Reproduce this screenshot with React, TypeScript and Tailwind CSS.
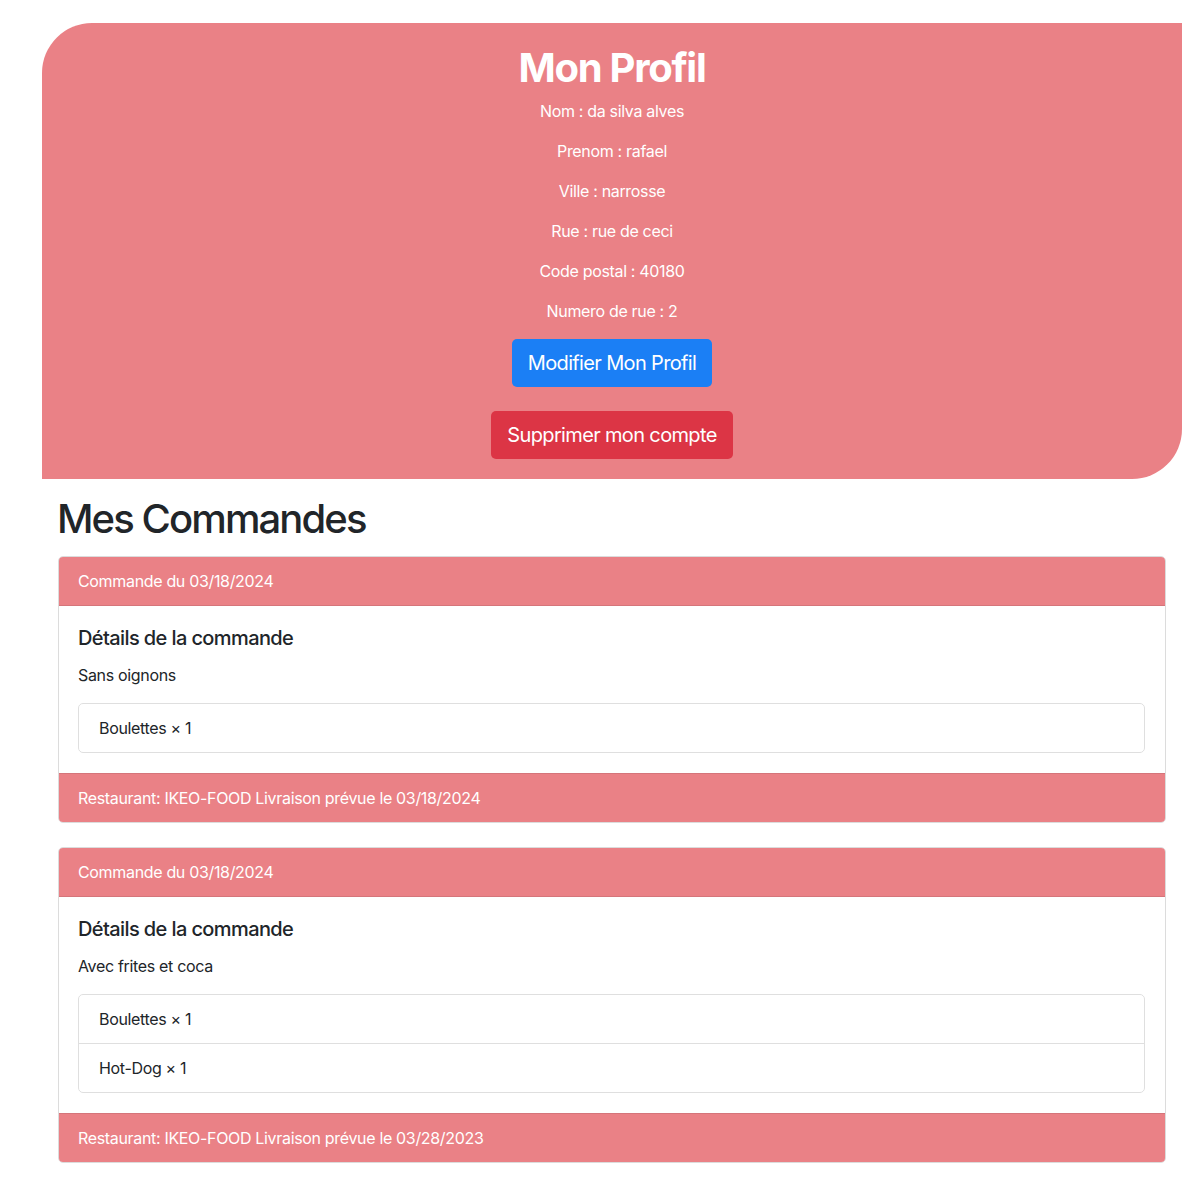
import React from "react";

const orders = [
  {
    date: "03/18/2024",
    details: "Sans oignons",
    items: ["Boulettes × 1"],
    delivery: "03/18/2024",
  },
  {
    date: "03/18/2024",
    details: "Avec frites et coca",
    items: ["Boulettes × 1", "Hot-Dog × 1"],
    delivery: "03/28/2023",
  },
];

const fields = [
  "Nom : da silva alves",
  "Prenom : rafael",
  "Ville : narrosse",
  "Rue : rue de ceci",
  "Code postal : 40180",
  "Numero de rue : 2",
];

export default function App() {
  return (
    <div
      className="min-h-[1204px] bg-white text-[#212529] text-[16px] leading-[24px] tracking-[-0.33px]"
      style={{ fontFamily: "Inter, 'Noto Sans', sans-serif" }}
    >
      <div className="pt-[23px] pl-[42px] w-[1182px]">
        <div className="bg-[#ea8186] rounded-tl-[50px] rounded-br-[50px] pt-[21px] pb-[20px] flex flex-col items-center text-white">
          <h1 className="text-[40px] leading-[48px] font-bold mb-[7px] tracking-[-1.3px]">Mon Profil</h1>
          {fields.map((f) => (
            <p key={f} className="mb-[16px] text-[16px] leading-[24px]">
              {f}
            </p>
          ))}
          <button className="bg-[#1b7ff5] text-white text-[20px] leading-[30px] px-[16px] py-[9px] rounded-[5px] tracking-[-0.65px]">
            Modifier Mon Profil
          </button>
          <button className="mt-[24px] bg-[#dc3545] text-white text-[20px] leading-[30px] px-[16px] py-[9px] rounded-[5px] tracking-[-0.65px]">
            Supprimer mon compte
          </button>
        </div>
        <div className="px-[16px]">
          <h1 className="text-[40px] leading-[48px] font-medium mt-[16px] mb-[13px] -ml-[1px] tracking-[-1.9px]">Mes Commandes</h1>
          {orders.map((o, i) => (
            <div key={i} className="border border-[#dcdcdc] rounded-[5px] mb-[24px] overflow-hidden">
              <div className="bg-[#ea8186] text-white pl-[19px] pr-[20px] pt-[12px] pb-[12px] border-b border-[#d5757a]">
                Commande du {o.date}
              </div>
              <div className="pt-[20px] pb-[20px] pl-[19px] pr-[20px]">
                <h5 className="text-[20px] leading-[24px] font-medium mb-[13px] tracking-[-0.6px]">Détails de la commande</h5>
                <p className="mb-[16px]">{o.details}</p>
                <div className="border border-[#dfdfdf] rounded-[5px]">
                  {o.items.map((it, j) => (
                    <div
                      key={j}
                      className={`px-[20px] py-[12px] ${j > 0 ? "border-t border-[#dfdfdf]" : ""}`}
                    >
                      {it}
                    </div>
                  ))}
                </div>
              </div>
              <div className="bg-[#ea8186] text-white pl-[19px] pr-[20px] pt-[12px] pb-[12px] border-t border-[#d5757a]">
                Restaurant: IKEO-FOOD Livraison prévue le {o.delivery}
              </div>
            </div>
          ))}
        </div>
      </div>
    </div>
  );
}
